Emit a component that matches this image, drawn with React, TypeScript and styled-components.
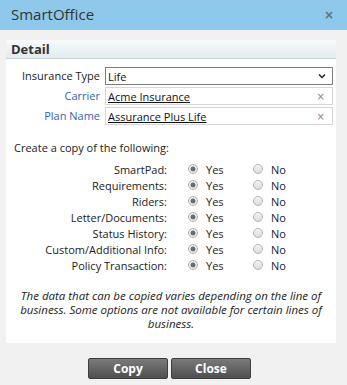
import React, { useState } from 'react';
import styled, { createGlobalStyle } from 'styled-components';

const GlobalStyle = createGlobalStyle`
  html, body {
    margin: 0;
    padding: 0;
    background: #f1f1f1;
    font-family: "Open Sans", "Liberation Sans", sans-serif;
  }
`;

const options = [
  'SmartPad:',
  'Requirements:',
  'Riders:',
  'Letter/Documents:',
  'Status History:',
  'Custom/Additional Info:',
  'Policy Transaction:',
];

function App(): JSX.Element {
  const [values, setValues] = useState<boolean[]>(options.map(() => true));

  const handleChange = (idx: number, val: boolean) => {
    setValues(values.map((v, i) => (i === idx ? val : v)));
  };

  return (
    <Dialog>
      <GlobalStyle />
      <TitleBar>
        <Title>SmartOffice</Title>
        <CloseX>×</CloseX>
      </TitleBar>
      <Body>
        <Panel>
          <PanelHeader>Detail</PanelHeader>
          <Fields>
            <FieldLabel>Insurance Type</FieldLabel>
            <SelectBox>
              <span>Life</span>
              <Chevron viewBox="0 0 8 6">
                <path d="M1 1.5 L4 4.5 L7 1.5" fill="none" stroke="#222" strokeWidth="1.5" />
              </Chevron>
            </SelectBox>
            <FieldLabel link>Carrier</FieldLabel>
            <LookupBox>
              <LinkText>Acme Insurance</LinkText>
              <Clear>×</Clear>
            </LookupBox>
            <FieldLabel link>Plan Name</FieldLabel>
            <LookupBox>
              <LinkText>Assurance Plus Life</LinkText>
              <Clear>×</Clear>
            </LookupBox>
          </Fields>
          <CopyHeading>Create a copy of the following:</CopyHeading>
          <OptionGrid>
            {options.map((label, idx) => (
              <React.Fragment key={label}>
                <OptionLabel>{label}</OptionLabel>
                <RadioWrap onClick={() => handleChange(idx, true)}>
                  <Radio checked={values[idx]} />
                  Yes
                </RadioWrap>
                <RadioWrap onClick={() => handleChange(idx, false)}>
                  <Radio checked={!values[idx]} />
                  No
                </RadioWrap>
              </React.Fragment>
            ))}
          </OptionGrid>
          <Note>
            The data that can be copied varies depending on the line of
            business. Some options are not available for certain lines of
            business.
          </Note>
        </Panel>
        <Buttons>
          <Button>Copy</Button>
          <Button>Close</Button>
        </Buttons>
      </Body>
    </Dialog>
  );
}

const Dialog = styled.div`
  width: 347px;
  height: 385px;
  display: flex;
  flex-direction: column;
  background: #f1f1f1;
  overflow: hidden;
`;

const TitleBar = styled.div`
  height: 30px;
  flex: none;
  display: flex;
  align-items: center;
  justify-content: space-between;
  padding: 0 13px 0 11px;
  background: #8ec9eb;
  box-sizing: border-box;
`;

const Title = styled.div`
  font-size: 15px;
  color: #333;
  margin-top: -2px;
`;

const CloseX = styled.div`
  font-size: 12px;
  font-weight: 700;
  color: #5f6f78;
  font-family: "DejaVu Sans", sans-serif;
`;

const Body = styled.div`
  padding: 10px 11px 0 6px;
  display: flex;
  flex-direction: column;
`;

const Panel = styled.div`
  background: #fff;
  height: 303px;
  box-sizing: border-box;
`;

const PanelHeader = styled.div`
  height: 19px;
  box-sizing: border-box;
  padding: 0 5px;
  font-size: 13px;
  font-weight: 700;
  line-height: 18px;
  color: #333;
  background: linear-gradient(#f7fafa, #e3ebee);
  border-bottom: 1px solid #c8d0d4;
`;

const Fields = styled.div`
  display: grid;
  grid-template-columns: 94px 228px;
  column-gap: 5px;
  row-gap: 2px;
  padding: 8px 3px 0 0;
  align-items: center;
`;

const FieldLabel = styled.div<{ link?: boolean }>`
  text-align: right;
  font-size: 11px;
  line-height: 18px;
  color: ${({ link }) => (link ? '#3d5fa8' : '#222')};
`;

const SelectBox = styled.div`
  height: 18px;
  box-sizing: border-box;
  border: 1px solid #7d7d7d;
  display: flex;
  align-items: center;
  justify-content: space-between;
  padding: 0 6px 0 2px;
  font-size: 11px;
  color: #111;
`;

const Chevron = styled.svg`
  width: 8px;
  height: 6px;
`;

const LookupBox = styled.div`
  height: 18px;
  box-sizing: border-box;
  border: 1px solid #d6d6d6;
  display: flex;
  align-items: center;
  justify-content: space-between;
  padding: 0 7px 0 2px;
  font-size: 11px;
`;

const LinkText = styled.span`
  color: #111;
  text-decoration: underline;
`;

const Clear = styled.span`
  color: #888;
  font-size: 10px;
  font-family: "DejaVu Sans", sans-serif;
`;

const CopyHeading = styled.div`
  margin: 15px 0 0 8px;
  font-size: 11px;
  color: #222;
`;

const OptionGrid = styled.div`
  display: grid;
  grid-template-columns: 182px 65px auto;
  grid-auto-rows: 16px;
  margin-top: 6px;
  align-items: center;
  font-size: 11px;
  color: #222;
`;

const OptionLabel = styled.div`
  text-align: right;
  padding-right: 21px;
`;

const RadioWrap = styled.label`
  display: flex;
  align-items: center;
  gap: 8px;
  cursor: pointer;
`;

const Radio = styled.span<{ checked: boolean }>`
  width: 10px;
  height: 10px;
  box-sizing: border-box;
  border-radius: 50%;
  border: 1px solid #b4b4b4;
  background: ${({ checked }) =>
    checked
      ? 'radial-gradient(circle, #6e6e6e 0 2.2px, #e9e9e9 2.8px)'
      : 'linear-gradient(#f4f4f4, #dcdcdc)'};
`;

const Note = styled.div`
  margin-top: 16px;
  padding: 0 6px;
  text-align: center;
  font-size: 11.5px;
  font-style: italic;
  line-height: 14px;
  color: #222;
`;

const Buttons = styled.div`
  display: flex;
  justify-content: center;
  gap: 3px;
  margin-top: 15px;
  padding-right: 3px;
`;

const Button = styled.button`
  width: 80px;
  height: 21px;
  border: 1px solid #3e3e3e;
  border-radius: 2px;
  background: linear-gradient(#7a7a7a, #4f4f4f);
  color: #fff;
  font-family: "Open Sans", "Liberation Sans", sans-serif;
  font-size: 12px;
  font-weight: 700;
  padding: 0;
  cursor: pointer;
`;

export default App;
